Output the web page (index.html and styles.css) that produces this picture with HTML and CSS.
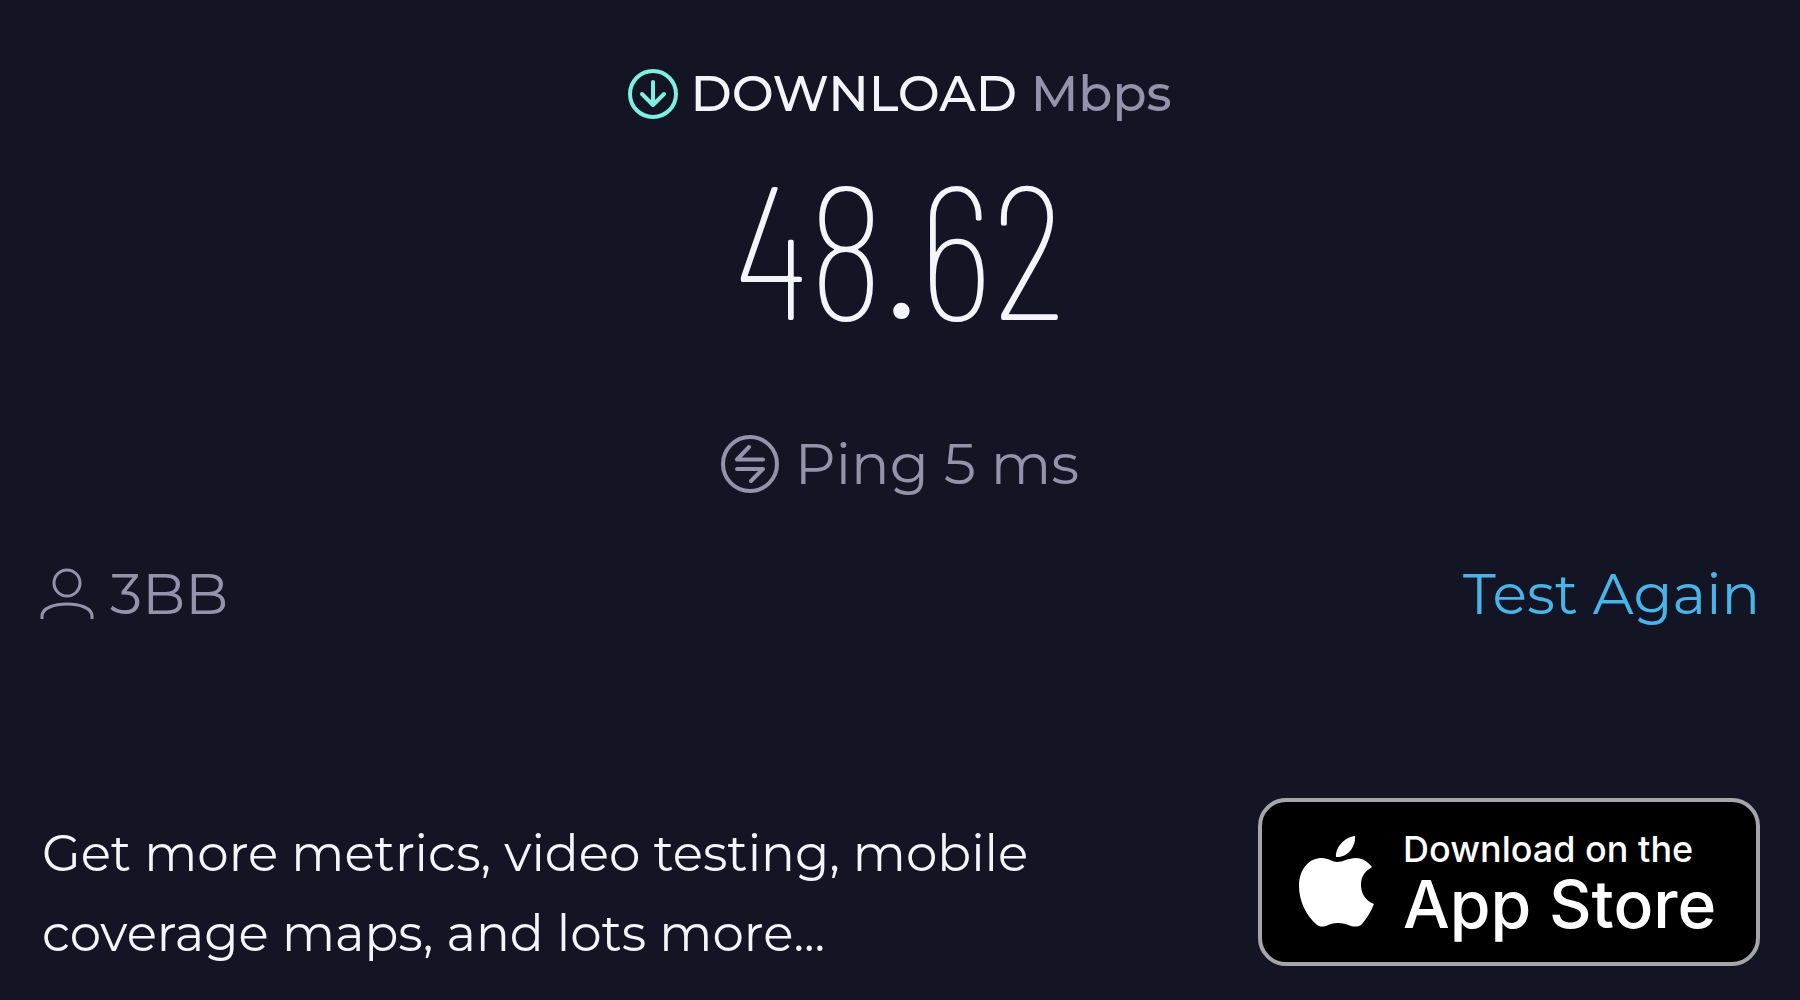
FILE: index.html
```html
<!DOCTYPE html>
<html lang="en">
<head>
    <meta charset="UTF-8">
    <meta name="viewport" content="width=device-width, initial-scale=1.0">
    <title>Speed Test</title>
    <link rel="stylesheet" href="styles.css">
</head>
<body>
    <main class="container">
        <section class="result">
            <h1 class="download">
                <svg class="download-icon" viewBox="0 0 50 50" aria-hidden="true">
                    <circle cx="25" cy="25" r="23"/>
                    <path d="M25 13v23M14 25l11 11 11-11"/>
                </svg>
                <span>DOWNLOAD <span class="unit">Mbps</span></span>
            </h1>
            <div class="speed">48.62</div>
            <div class="ping">
                <svg class="ping-icon" viewBox="0 0 58 58" aria-hidden="true">
                    <circle cx="29" cy="29" r="27"/>
                    <path d="M28 12L16 24.500H42M16 34H42L30 46"/>
                </svg>
                <span>Ping 5 ms</span>
            </div>
        </section>

        <div class="provider-row">
            <div class="provider">
                <svg class="user-icon" viewBox="0 0 54 52" aria-hidden="true">
                    <circle cx="27" cy="15" r="13"/>
                    <path d="M2 51v-3C2 32 52 32 52 48v3"/>
                </svg>
                <span>3BB</span>
            </div>
            <button class="again" type="button">Test Again</button>
        </div>

        <footer class="promo">
            <p>Get more metrics, video testing, mobile coverage maps, and lots more...</p>
            <a class="badge" href="#">
                <svg class="apple-icon" viewBox="0 0 76 92" aria-hidden="true">
                    <path d="M56 0C57 11 48 22 37 21C36 11 46 1 56 0Z"/>
                    <path d="M38 26C44 26 49 22 57 22C64 22 69 26 73 31C65 36 62 41 62 49C62 58 67 65 75 68C72 76 67 83 63 88C60 91 56 91 52 90C47 88 44 87 39 87C34 87 31 88 27 90C23 91 20 91 17 88C8 80 0 66 0 50C0 32 11 22 23 22C29 22 34 26 38 26Z"/>
                </svg>
                <span class="badge-text">
                    <span class="badge-small">Download on the</span>
                    <span class="badge-large">App Store</span>
                </span>
            </a>
        </footer>
    </main>
</body>
</html>
```

FILE: styles.css
```css
* {
    box-sizing: border-box;
}
body {
    margin: 0;
    background-color: #141524;
    color: #f4f4fb;
    font-family: Montserrat, Inter, sans-serif;
    font-weight: 400;
}
svg {
    flex: none;
    fill: none;
    stroke: currentColor;
    stroke-width: 4;
    stroke-linecap: round;
    stroke-linejoin: round;
}
.container {
    padding: 62px 40px 32px;
}
.result {
    display: flex;
    flex-direction: column;
    align-items: center;
}
.download {
    display: flex;
    align-items: center;
    gap: 12px;
    margin: 0;
    font-size: 50px;
    font-weight: 500;
    line-height: 64px;
}
.download-icon {
    width: 50px;
    height: 50px;
    color: #7df0e2;
}
.unit {
    color: #9394ab;
}
.speed {
    margin: 18px 0 54px;
    font-family: "Barlow Condensed", "Roboto Condensed", Roboto, sans-serif;
    font-size: 190px;
    font-weight: 200;
    line-height: 200px;
}
.ping {
    display: flex;
    align-items: center;
    gap: 16px;
    margin-top: 32px;
    color: #9394ab;
    font-size: 57px;
    line-height: 68px;
}
.ping-icon {
    width: 58px;
    height: 58px;
}
.provider-row {
    display: flex;
    justify-content: space-between;
    align-items: center;
    margin-top: 62px;
    font-size: 57px;
    line-height: 68px;
}
.provider {
    display: flex;
    align-items: center;
    gap: 16px;
    color: #9394ab;
}
.user-icon {
    width: 54px;
    height: 52px;
    stroke-width: 3;
    stroke-linecap: butt;
}
.again {
    padding: 0;
    border: none;
    background: none;
    color: #49b4e8;
    font: inherit;
    cursor: pointer;
}
.promo {
    display: flex;
    justify-content: space-between;
    align-items: center;
    margin-top: 162px;
}
.promo p {
    max-width: 1040px;
    margin: 0;
    padding: 24px 0 0 2px;
    font-size: 50px;
    line-height: 80px;
}
.badge {
    display: flex;
    flex: none;
    align-items: center;
    gap: 28px;
    width: 502px;
    height: 168px;
    padding: 0 37px;
    border: 4px solid #a6a6aa;
    border-radius: 28px;
    background-color: #000;
    color: #fff;
    font-family: Inter, sans-serif;
    text-decoration: none;
}
.apple-icon {
    width: 76px;
    height: 92px;
    fill: currentColor;
    stroke: none;
}
.badge-text {
    display: flex;
    flex-direction: column;
    white-space: nowrap;
}
.badge-small {
    font-size: 36px;
    font-weight: 500;
    line-height: 44px;
}
.badge-large {
    font-size: 66px;
    font-weight: 500;
    line-height: 66px;
}
```
